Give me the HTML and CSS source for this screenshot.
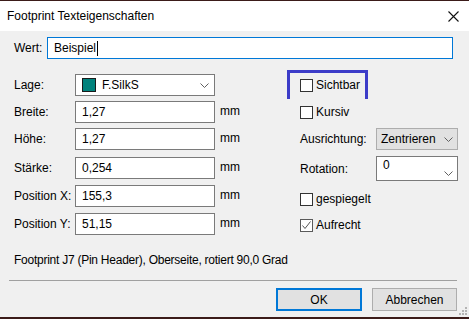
FILE: index.html
```html
<!DOCTYPE html>
<html lang="de">
<head>
    <meta charset="UTF-8">
    <title>Footprint Texteigenschaften</title>
    <link rel="stylesheet" href="styles.css">
</head>
<body>
<div class="dialog">
    <div class="titlebar">
        <span>Footprint Texteigenschaften</span>
        <svg class="close" width="11" height="11" viewBox="0 0 11 11"><path d="M0.5 0.5 L10.5 10.5 M10.5 0.5 L0.5 10.5" stroke="#111" stroke-width="1.1" fill="none"/></svg>
    </div>
    <div class="content">
        <div class="wert-row">
            <span class="wert-label">Wert:</span>
            <div class="field focus">Beispiel<span class="caret"></span></div>
        </div>
        <div class="fields">
            <span class="label">Lage:</span>
            <div class="field">
                <span class="swatch"></span>
                <span class="grow">F.SilkS</span>
                <svg class="chev" width="9" height="5" viewBox="0 0 9 5"><path d="M0.5 0.5 L4.5 4.5 L8.5 0.5" stroke="#606060" fill="none"/></svg>
            </div>
            <span></span>
            <div class="check"><span class="box"></span>Sichtbar<span class="highlight"></span></div>

            <span class="label">Breite:</span>
            <div class="field">1,27</div>
            <span class="unit">mm</span>
            <div class="check"><span class="box"></span>Kursiv</div>

            <span class="label">Höhe:</span>
            <div class="field">1,27</div>
            <span class="unit">mm</span>
            <span class="label">Ausrichtung:</span>
            <div class="field select">
                <span class="grow">Zentrieren</span>
                <svg class="chev" width="9" height="5" viewBox="0 0 9 5"><path d="M0.5 0.5 L4.5 4.5 L8.5 0.5" stroke="#606060" fill="none"/></svg>
            </div>

            <span class="label">Stärke:</span>
            <div class="field">0,254</div>
            <span class="unit">mm</span>
            <span class="label tall">Rotation:</span>
            <div class="field combo">
                <span class="grow">0</span>
                <svg class="chev" width="9" height="5" viewBox="0 0 9 5"><path d="M0.5 0.5 L4.5 4.5 L8.5 0.5" stroke="#606060" fill="none"/></svg>
            </div>

            <span class="label">Position X:</span>
            <div class="field">155,3</div>
            <span class="unit">mm</span>
            <div class="check low"><span class="box"></span>gespiegelt</div>

            <span class="label">Position Y:</span>
            <div class="field">51,15</div>
            <span class="unit">mm</span>
            <div class="check low1"><span class="box checked"><svg width="11" height="11" viewBox="0 0 11 11"><path d="M1.5 5.5 L4 8.5 L9.5 1.5" stroke="#555" fill="none"/></svg></span>Aufrecht</div>
        </div>
        <p class="info">Footprint J7 (Pin Header), Oberseite, rotiert 90,0 Grad</p>
    </div>
    <div class="footer">
        <div class="sep"></div>
        <div class="buttons">
            <button class="btn default">OK</button>
            <button class="btn">Abbrechen</button>
        </div>
    </div>
    <svg class="grip" width="8" height="8" viewBox="0 0 8 8">
        <rect x="6" y="0" width="2" height="2" fill="#b4b4b4"/>
        <rect x="3" y="3" width="2" height="2" fill="#b4b4b4"/>
        <rect x="6" y="3" width="2" height="2" fill="#b4b4b4"/>
        <rect x="0" y="6" width="2" height="2" fill="#b4b4b4"/>
        <rect x="3" y="6" width="2" height="2" fill="#b4b4b4"/>
        <rect x="6" y="6" width="2" height="2" fill="#b4b4b4"/>
    </svg>
</div>
</body>
</html>
```

FILE: styles.css
```css
body {
    margin: 0;
    padding-top: 1px;
    height: 318px;
    background-color: #3b1b19;
    font-family: "Liberation Sans", Arial, sans-serif;
    font-size: 12px;
    color: #000;
}

.dialog {
    position: relative;
    width: 469px;
    height: 316px;
    background-color: #f0f0f0;
    display: flex;
    flex-direction: column;
}

.titlebar {
    height: 30px;
    background-color: #fff;
    display: flex;
    align-items: center;
    justify-content: space-between;
    padding: 0 10px 0 7px;
}

.content {
    padding: 6px 16px 0 14px;
}

.wert-row {
    display: flex;
    align-items: center;
}

.wert-label {
    width: 33px;
}

.wert-row .field {
    flex: 1;
}

.field {
    box-sizing: border-box;
    height: 22px;
    border: 1px solid #7a7a7a;
    background-color: #fff;
    padding: 0 6px;
    display: flex;
    align-items: center;
}

.field.focus {
    border-color: #0078d7;
}

.caret {
    display: inline-block;
    width: 1px;
    height: 15px;
    margin-left: 1px;
    background-color: #000;
}

.fields {
    display: grid;
    grid-template-columns: 61px 140px 85px 76px 82px;
    grid-template-rows: 27px 27px 29px 28px 28px 22px;
    align-items: start;
    margin-top: 15px;
}

.label, .unit {
    height: 22px;
    display: flex;
    align-items: center;
}

.unit {
    padding-left: 5px;
    margin-top: -1px;
}

.label.tall {
    height: 25px;
    margin-top: -1px;
}

.grow {
    flex: 1;
}

.swatch {
    width: 12px;
    height: 12px;
    border: 1px solid #1a1a1a;
    background-color: #00827c;
    margin-right: 6px;
}

.chev {
    margin-right: -1px;
}

.field.select {
    background-color: #e1e1e1;
    border-color: #adadad;
    padding: 0 5px 0 4px;
}

.field.combo {
    height: 25px;
    margin-top: -1px;
    padding: 0 5px 0 6px;
    align-items: flex-start;
}

.combo .grow {
    padding-top: 1px;
}

.combo .chev {
    margin-top: 14px;
}

.check {
    grid-column: 4 / 6;
    position: relative;
    height: 22px;
    display: flex;
    align-items: center;
}

.check.low {
    margin-top: 3px;
}

.check.low1 {
    margin-top: 1px;
}

.box {
    box-sizing: border-box;
    width: 13px;
    height: 13px;
    border: 1px solid #333;
    background-color: #fff;
    margin-right: 3px;
    display: flex;
}

.box.checked {
    border-color: #5a5a5a;
}

/* marker drawn over the Sichtbar checkbox */
.highlight {
    position: absolute;
    left: -13px;
    top: -4px;
    width: 75px;
    height: 26px;
    border: 3px solid #3c3cc8;
    border-bottom: none;
}

.info {
    margin: 17px 0 0;
    line-height: 16px;
    letter-spacing: -0.25px;
}

.footer {
    padding: 0 12px 0 9px;
}

.sep {
    height: 1px;
    background-color: #a0a0a0;
    margin-top: 12px;
}

.buttons {
    display: flex;
    justify-content: flex-end;
    gap: 10px;
    margin-top: 7px;
}

.btn {
    box-sizing: border-box;
    width: 85px;
    height: 23px;
    border: 1px solid #adadad;
    background-color: #e1e1e1;
    font-family: "Liberation Sans", Arial, sans-serif;
    font-size: 12px;
    color: #000;
    padding: 0;
}

.btn.default {
    width: 86px;
    border: 2px solid #0078d7;
}

.grip {
    position: absolute;
    right: 2px;
    bottom: 2px;
}
```
